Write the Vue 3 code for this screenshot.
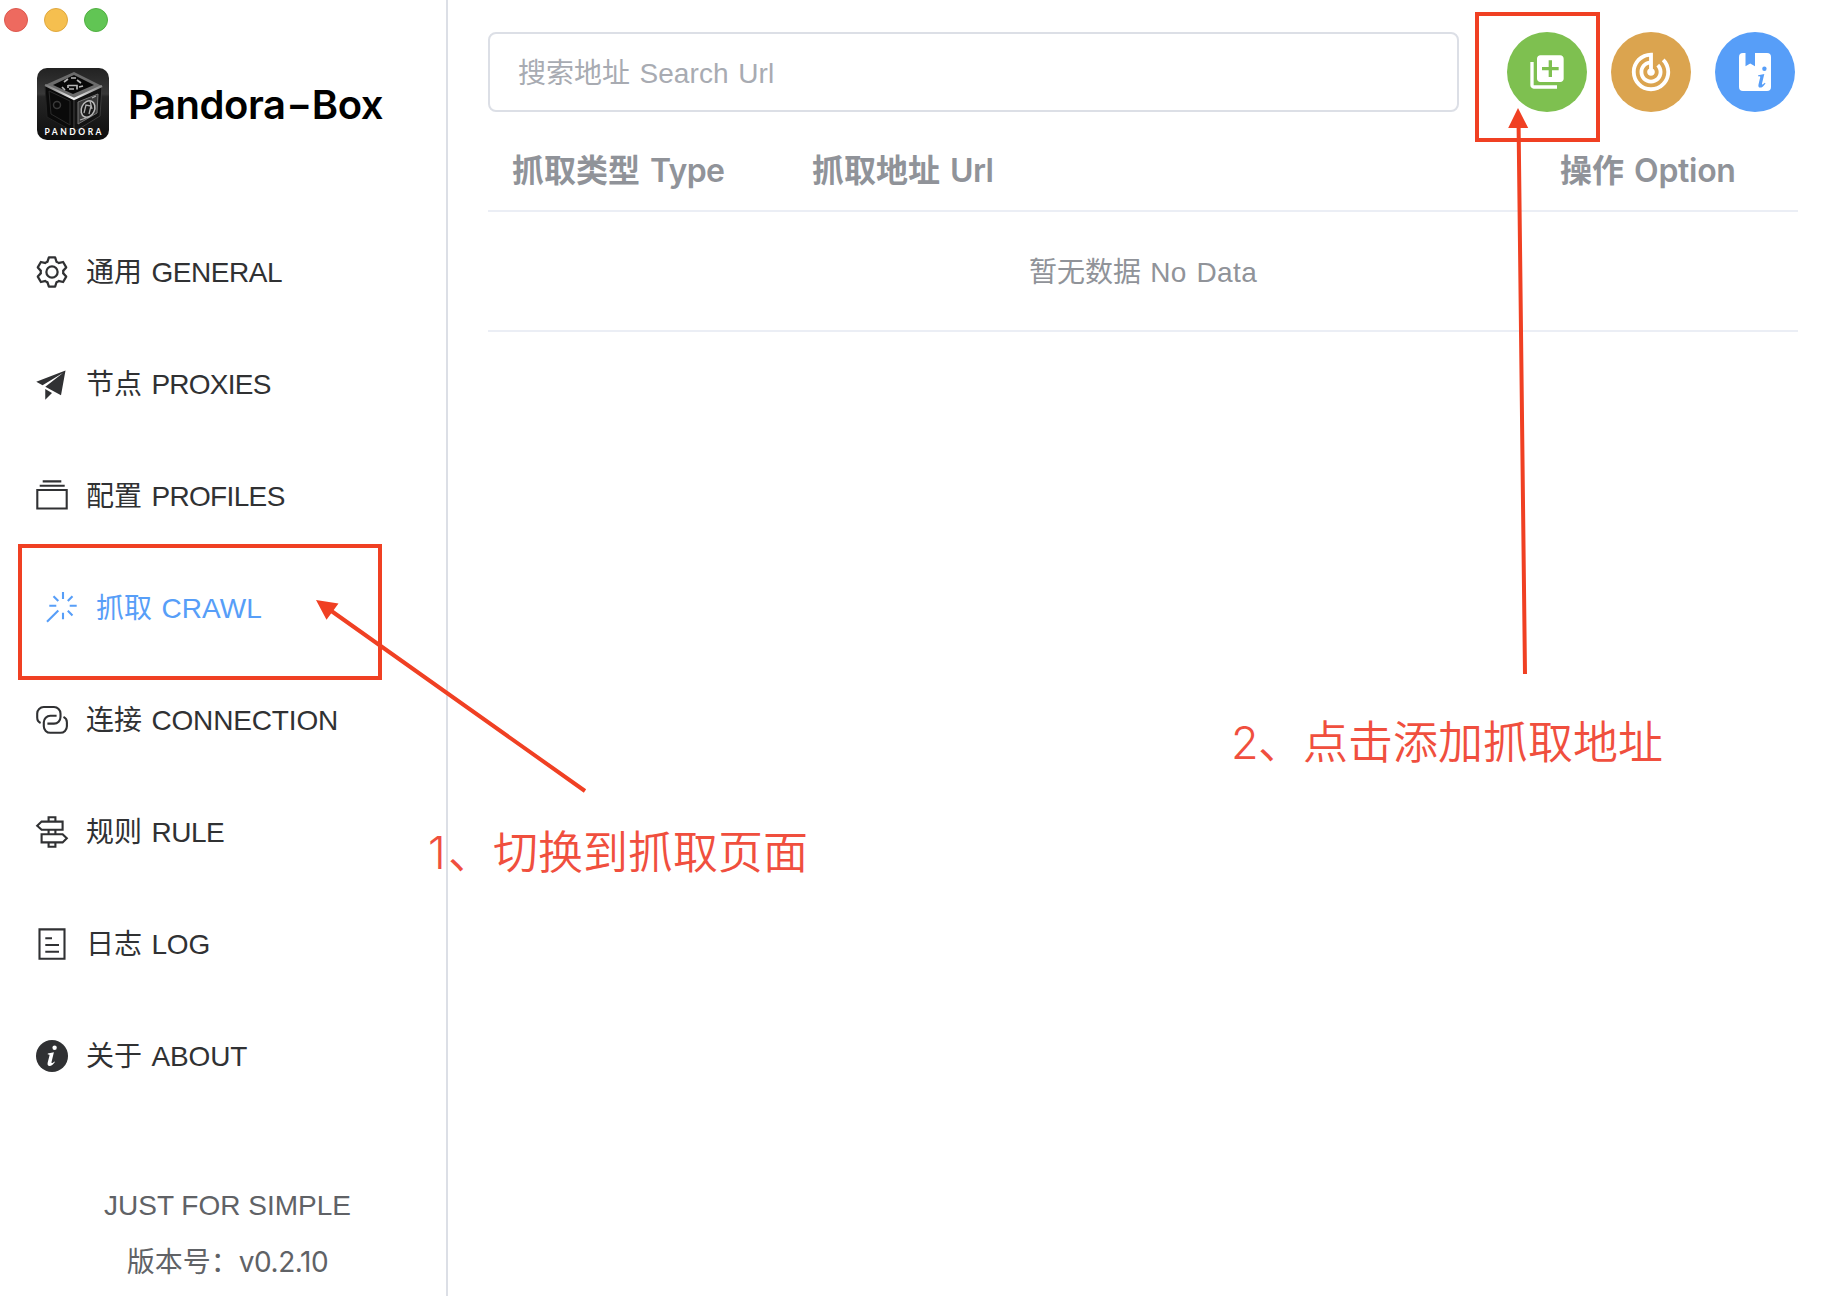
<script setup>
const menu = [
  { id: 'general', zh: '通用', en: 'GENERAL', track: -0.45 },
  { id: 'proxies', zh: '节点', en: 'PROXIES', track: -0.75 },
  { id: 'profiles', zh: '配置', en: 'PROFILES', track: -0.65 },
  { id: 'crawl', zh: '抓取', en: 'CRAWL', active: true, track: 0.1 },
  { id: 'connection', zh: '连接', en: 'CONNECTION', track: -0.15 },
  { id: 'rule', zh: '规则', en: 'RULE', track: -0.45 },
  { id: 'log', zh: '日志', en: 'LOG', track: -0.15 },
  { id: 'about', zh: '关于', en: 'ABOUT', track: -0.1 },
]
</script>

<template>
  <div class="app">
    <aside class="sidebar">
      <div class="lights"><i class="red"></i><i class="yellow"></i><i class="green"></i></div>
      <div class="brand">
        <svg class="logo" viewBox="0 0 72 72">
          <defs>
            <linearGradient id="bg" x1="0" y1="0" x2="0" y2="1">
              <stop offset="0" stop-color="#222" />
              <stop offset=".36" stop-color="#383838" />
              <stop offset=".4" stop-color="#262626" />
              <stop offset="1" stop-color="#0e0e0e" />
            </linearGradient>
            <linearGradient id="edge" x1="0" y1="0" x2="1" y2="0">
              <stop offset="0" stop-color="#777" />
              <stop offset=".5" stop-color="#f2f2f2" />
              <stop offset="1" stop-color="#888" />
            </linearGradient>
          </defs>
          <rect width="72" height="72" rx="10" fill="url(#bg)" />
          <path d="M8 17L37 29V64L10 49Z" fill="#0a0a0a" stroke="#222" />
          <path d="M37 29L65 18L63 48L37 64Z" fill="#131313" stroke="#3c3c3c" />
          <path d="M8 17L37 4L65 18L36 31Z" fill="#6c6c6c" />
          <path d="M8 17L37 31L65 18" fill="none" stroke="url(#edge)" stroke-width="2.4" />
          <path d="M16 17L37 7L57 17L36 26Z" fill="#080808" />
          <path d="M31 17.500h9v4M32 21h5M31 17v3M27 14l4-3M40 12l4 3M25 19l3 3M42 19l4-1M34 10h5" fill="none" stroke="#b5b5b5" stroke-width="1.700" />
          <path d="M12 23L33 33V57L14 46Z" fill="none" stroke="#2b2b2b" />
          <circle cx="20" cy="37" r="3.500" fill="none" stroke="#3a3a3a" stroke-width="1.500" />
          <path d="M41 34L61 26L60 45L41 56Z" fill="#3a3a3a" stroke="#777" stroke-width="1" />
          <ellipse cx="51" cy="41" rx="6.500" ry="8.500" transform="rotate(25 51 41)" fill="#1a1a1a" stroke="#bbb" stroke-width="1.500" />
          <path d="M47 45l2-8 5 1-2 8M53 33l2 8M43 52l9-3M55 30l4-2" fill="none" stroke="#b0b0b0" stroke-width="1.300" />
          <text x="7.500" y="67" textLength="57" font-size="8.500">PANDORA</text>
        </svg>
        <h1>Pandora<span class="dash">-</span>Box</h1>
      </div>

      <nav>
        <a v-for="m in menu" :key="m.id" :class="{ active: m.active }">
          <svg v-if="m.id === 'general'" viewBox="0 0 1024 1024" fill="currentColor"><path d="M600.704 64a32 32 0 0 1 30.464 22.208l35.2 109.376c14.784 7.232 28.928 15.36 42.432 24.512l112.384-24.192a32 32 0 0 1 34.432 15.36L944.32 364.8a32 32 0 0 1-4.032 37.504l-77.12 85.12a357.12 357.12 0 0 1 0 49.024l77.12 85.248a32 32 0 0 1 4.032 37.504l-88.704 153.6a32 32 0 0 1-34.432 15.296L708.8 803.904c-13.44 9.088-27.648 17.28-42.368 24.512l-35.264 109.376A32 32 0 0 1 600.704 960H423.296a32 32 0 0 1-30.464-22.208L357.696 828.48a351.616 351.616 0 0 1-42.56-24.64l-112.32 24.256a32 32 0 0 1-34.432-15.36L79.68 659.2a32 32 0 0 1 4.032-37.504l77.12-85.248a357.12 357.12 0 0 1 0-48.896l-77.12-85.248A32 32 0 0 1 79.68 364.8l88.704-153.6a32 32 0 0 1 34.432-15.296l112.32 24.256c13.568-9.152 27.776-17.408 42.56-24.64l35.2-109.312A32 32 0 0 1 423.232 64H600.64zm-23.424 64H446.72l-36.352 113.088-24.512 11.968a294.113 294.113 0 0 0-34.816 20.096l-22.656 15.36-116.224-25.088-65.28 113.152 79.68 88.192-1.92 27.136a293.12 293.12 0 0 0 0 40.192l1.92 27.136-79.808 88.192 65.344 113.152 116.224-25.024 22.656 15.296a294.113 294.113 0 0 0 34.816 20.096l24.512 11.968L446.72 896h130.688l36.48-113.152 24.448-11.904a288.282 288.282 0 0 0 34.752-20.096l22.592-15.296 116.288 25.024 65.28-113.152-79.744-88.192 1.92-27.136a293.12 293.12 0 0 0 0-40.256l-1.92-27.136 79.808-88.128-65.344-113.152-116.288 24.96-22.592-15.232a287.616 287.616 0 0 0-34.752-20.096l-24.448-11.904L577.344 128zM512 320a192 192 0 1 1 0 384 192 192 0 0 1 0-384zm0 64a128 128 0 1 0 0 256 128 128 0 0 0 0-256z" /></svg>
          <svg v-else-if="m.id === 'proxies'" viewBox="0 0 1024 1024" fill="currentColor"><path d="m64 448 832-320-128 704-446.080-243.328L832 192 242.816 545.472 64 448zm256 512V657.024L512 768 320 960z" /></svg>
          <svg v-else-if="m.id === 'profiles'" class="line" viewBox="0 0 36 36"><path d="M3.300 12H32.700V30.500H3.300ZM8.700 3.400H27.300M5.700 7.800H30.700" /></svg>
          <svg v-else-if="m.id === 'crawl'" class="line" viewBox="0 0 36 36"><path d="M19 2V9M19 22.700V29.300M5.300 15.700H12.300M25.700 15.700H32.700M9.500 6.200L14.300 11M28.500 6.200L23.800 11M23.800 20.800L28.500 25.500M14.300 20.500L3 31.700" /></svg>
          <svg v-else-if="m.id === 'connection'" class="line" viewBox="0 0 36 36"><path d="M6.600 21C4.500 20 3.200 18 3.200 15.500V11.500A6.500 6.500 0 0 1 9.700 5H20A6.500 6.500 0 0 1 26.500 11.500V15A6.500 6.500 0 0 1 20 21.600H13.400M22.600 13.800H16.300A6.500 6.500 0 0 0 9.800 20.300V24.300A6.500 6.500 0 0 0 16.300 30.800H26.400A6.500 6.500 0 0 0 32.900 24.300V20.300C32.900 18 31.600 16 29.500 14.900" /></svg>
          <svg v-else-if="m.id === 'rule'" class="line" viewBox="0 0 36 36"><path d="M14.600 7.600V3.200H21.400V7.600M3.200 11.800L7.600 7.600H28.600V15.800H7.600ZM14.600 15.800V20.200M21.400 15.800V20.200M32.800 24.300L28.600 20.200H7.600V28.400H28.600ZM14.600 28.400V32.800H21.400V28.400" /></svg>
          <svg v-else-if="m.id === 'log'" class="line" viewBox="0 0 36 36"><path d="M5.500 3.400H30.500V32.800H5.500ZM11.300 12.300H18M11.300 19H25M11.300 25.700H25" /></svg>
          <svg v-else viewBox="0 0 36 36">
            <circle cx="18" cy="18" r="16" fill="currentColor" />
            <circle cx="20.600" cy="9.700" r="2.200" fill="#fff" />
            <path d="M13.800 15.600L19.900 14.300L17.600 23.800C17.200 25.600 18.300 25.500 20.300 23.400L20.900 24C19 26.800 17.400 27.900 15.600 27.900C13.800 27.900 13.200 26.600 13.700 24.500L15.500 17.400C15.700 16.500 15.200 16.300 13.800 16.400Z" fill="#fff" />
          </svg>
          <span class="label">{{ m.zh }} <span :style="{ letterSpacing: m.track + 'px' }">{{ m.en }}</span></span>
        </a>
      </nav>

      <footer>
        <p>JUST FOR SIMPLE</p>
        <p class="ver">版本号：<span>v0.2.10</span></p>
      </footer>
    </aside>

    <main>
      <div class="toolbar">
        <div class="search">搜索地址 <span>Search Url</span></div>
        <button class="add"><svg width="40" height="40" viewBox="0 0 24 24"><path d="M4 6H2v14c0 1.100.9 2 2 2h14v-2H4V6zm16-4H8c-1.100 0-2 .9-2 2v12c0 1.100.9 2 2 2h12c1.100 0 2-.9 2-2V4c0-1.100-.9-2-2-2zm-1 9h-4v4h-2v-4H9V9h4V5h2v4h4v2z" /></svg></button>
        <button class="track"><svg width="46" height="46" viewBox="0 0 24 24"><path d="M19.070 4.930l-1.410 1.410C19.100 7.790 20 9.790 20 12c0 4.420-3.580 8-8 8s-8-3.580-8-8c0-4.080 3.050-7.440 7-7.930v2.020C8.160 6.570 6 9.030 6 12c0 3.310 2.690 6 6 6s6-2.690 6-6c0-1.660-.67-3.160-1.760-4.240l-1.410 1.410C15.550 9.900 16 10.900 16 12c0 2.210-1.790 4-4 4s-4-1.790-4-4c0-1.860 1.280-3.410 3-3.860v2.140c-.6.350-1 .98-1 1.720 0 1.100.9 2 2 2s2-.9 2-2c0-.74-.4-1.380-1-1.720V2h-1C6.480 2 2 6.480 2 12s4.480 10 10 10 10-4.480 10-10c0-2.760-1.120-5.260-2.930-7.070z" /></svg></button>
        <button class="book">
          <svg width="32" height="38" viewBox="0 0 32 38">
            <path d="M4 0H6.500V13.300L11.200 10.500L16 13.300V0H28A4 4 0 0 1 32 4V34A4 4 0 0 1 28 38H4A4 4 0 0 1 0 34V4A4 4 0 0 1 4 0Z" />
            <circle cx="25.400" cy="15.700" r="2.200" fill="#579ef8" />
            <path d="M19.200 22.200L25.300 21L23 30.600C22.700 32 23.600 31.800 25.900 29.700L26.500 30.400C24.500 33.200 22.800 34.600 21.200 34.600C19.600 34.600 19.100 33.300 19.500 31.400L21.200 24.200C21.400 23.200 20.600 23 19 23.200Z" fill="#579ef8" />
          </svg>
        </button>
      </div>
      <div class="table">
        <div class="row head">
          <span class="c1">抓取类型 <b>Type</b></span>
          <span class="c2">抓取地址 <b>Url</b></span>
          <span class="c3">操作 <b>Option</b></span>
        </div>
        <div class="row empty"><p>暂无数据 <span>No Data</span></p></div>
      </div>
    </main>

    <div class="mark mark-menu"></div>
    <div class="mark mark-add"></div>
    <svg class="arrows" viewBox="0 0 1822 1296">
      <path d="M330 610L585 791M1518.600 126L1525 674" fill="none" stroke="#f04023" stroke-width="4" />
      <path d="M316 600L338.500 603.500L326.500 619.700ZM1518 108L1528.200 128H1508.200Z" fill="#f04023" />
    </svg>
    <div class="note note-1"><span>1</span>、切换到抓取页面</div>
    <div class="note note-2"><span>2</span>、点击添加抓取地址</div>
  </div>
</template>

<style>
body { margin: 0; background: #fff; }
</style>

<style scoped>
.app {
  position: relative;
  display: flex;
  width: 1822px;
  height: 1296px;
  overflow: hidden;
  background: #fff;
  font-family: "Liberation Sans", "Noto Sans CJK SC", sans-serif;
  font-size: 28px;
}
.sidebar {
  box-sizing: border-box;
  width: 448px;
  height: 1296px;
  border-right: 2px solid #dcdfe6;
  display: flex;
  flex-direction: column;
}
.lights { display: flex; gap: 16px; padding: 8px 0 0 4px; }
.lights i { box-sizing: border-box; width: 24px; height: 24px; border-radius: 50%; border: 1px solid; }
.red { background: #ee6a5f; border-color: #dd584e !important; }
.yellow { background: #f5bf4f; border-color: #e0a83e !important; }
.green { background: #61c554; border-color: #50b041 !important; }
.brand { display: flex; align-items: center; margin: 36px 0 0 37px; height: 72px; }
.logo { width: 72px; height: 72px; }
.logo text { fill: #fff; font-family: Lato, sans-serif; font-weight: 700; }
h1 {
  margin: 2px 0 0 19px;
  font: 600 40px/72px Inter, sans-serif;
  letter-spacing: -0.45px;
  color: #000;
  white-space: nowrap;
}
.dash { display: inline-block; transform: scaleX(1.4); margin: 0 4px; }
nav { display: flex; flex-direction: column; margin-top: 76px; }
nav a {
  display: flex;
  align-items: center;
  gap: 16px;
  height: 112px;
  padding-left: 34px;
  color: #303133;
  white-space: nowrap;
}
nav a.active { padding-left: 44px; color: #579ef8; }
nav svg { width: 36px; height: 36px; flex: none; }
.label { margin-bottom: 4px; word-spacing: 1.6px; }
.line { fill: none; stroke: currentColor; stroke-width: 2.1; }
footer { margin-top: 66px; width: 455px; text-align: center; color: #606266; }
footer p { margin: 0; line-height: 56px; }
.ver span { font-family: Inter, sans-serif; letter-spacing: -0.4px; }
main { flex: 1; padding: 32px 24px 0 40px; }
.toolbar { display: flex; height: 80px; }
.search {
  box-sizing: border-box;
  width: 971px;
  margin-right: 48px;
  border: 2px solid #dcdfe6;
  border-radius: 8px;
  padding-left: 28px;
  line-height: 79px;
  color: #a8abb2;
  word-spacing: 1.6px;
}
.search span { letter-spacing: 0.1px; }
button {
  width: 80px;
  height: 80px;
  margin: 0 24px 0 0;
  padding: 0;
  border: 0;
  border-radius: 50%;
  display: flex;
  align-items: center;
  justify-content: center;
  flex: none;
}
button svg { fill: #fff; }
.add { background: #7ec050; }
.track { background: #dba44f; }
.book { background: #579ef8; margin-right: 0; }
.table { width: 1310px; color: #909399; }
.row { box-sizing: border-box; display: flex; border-bottom: 2px solid #ebeef5; }
.head { height: 100px; padding: 19px 0 0 24px; font-size: 32px; line-height: 80px; font-weight: 700; white-space: nowrap; word-spacing: 1.2px; }
.head b { font-family: Inter, sans-serif; font-weight: 600; letter-spacing: -0.7px; }
.c1 { width: 300px; }
.c2 { width: 748px; }
.c3 b { letter-spacing: -0.3px; }
.empty { height: 120px; line-height: 122px; justify-content: center; }
.empty p { margin: 0; word-spacing: 1.6px; }
.empty span { letter-spacing: 0.35px; }
.mark { position: absolute; box-sizing: border-box; border: 4px solid #f04023; }
.mark-menu { left: 18px; top: 544px; width: 364px; height: 136px; }
.mark-add { left: 1475px; top: 12px; width: 125px; height: 130px; }
.arrows { position: absolute; left: 0; top: 0; width: 1822px; height: 1296px; }
.note { position: absolute; font-size: 45px; line-height: 60px; font-weight: 350; color: #f04f3e; white-space: nowrap; font-family: "Noto Sans CJK SC", sans-serif; }
.note span { display: inline-block; width: 27px; font-family: Inter, sans-serif; font-weight: 350; }
.note-1 { left: 428px; top: 820px; }
.note-1 span { width: 20px; }
.note-2 { left: 1231px; top: 710px; }
</style>
